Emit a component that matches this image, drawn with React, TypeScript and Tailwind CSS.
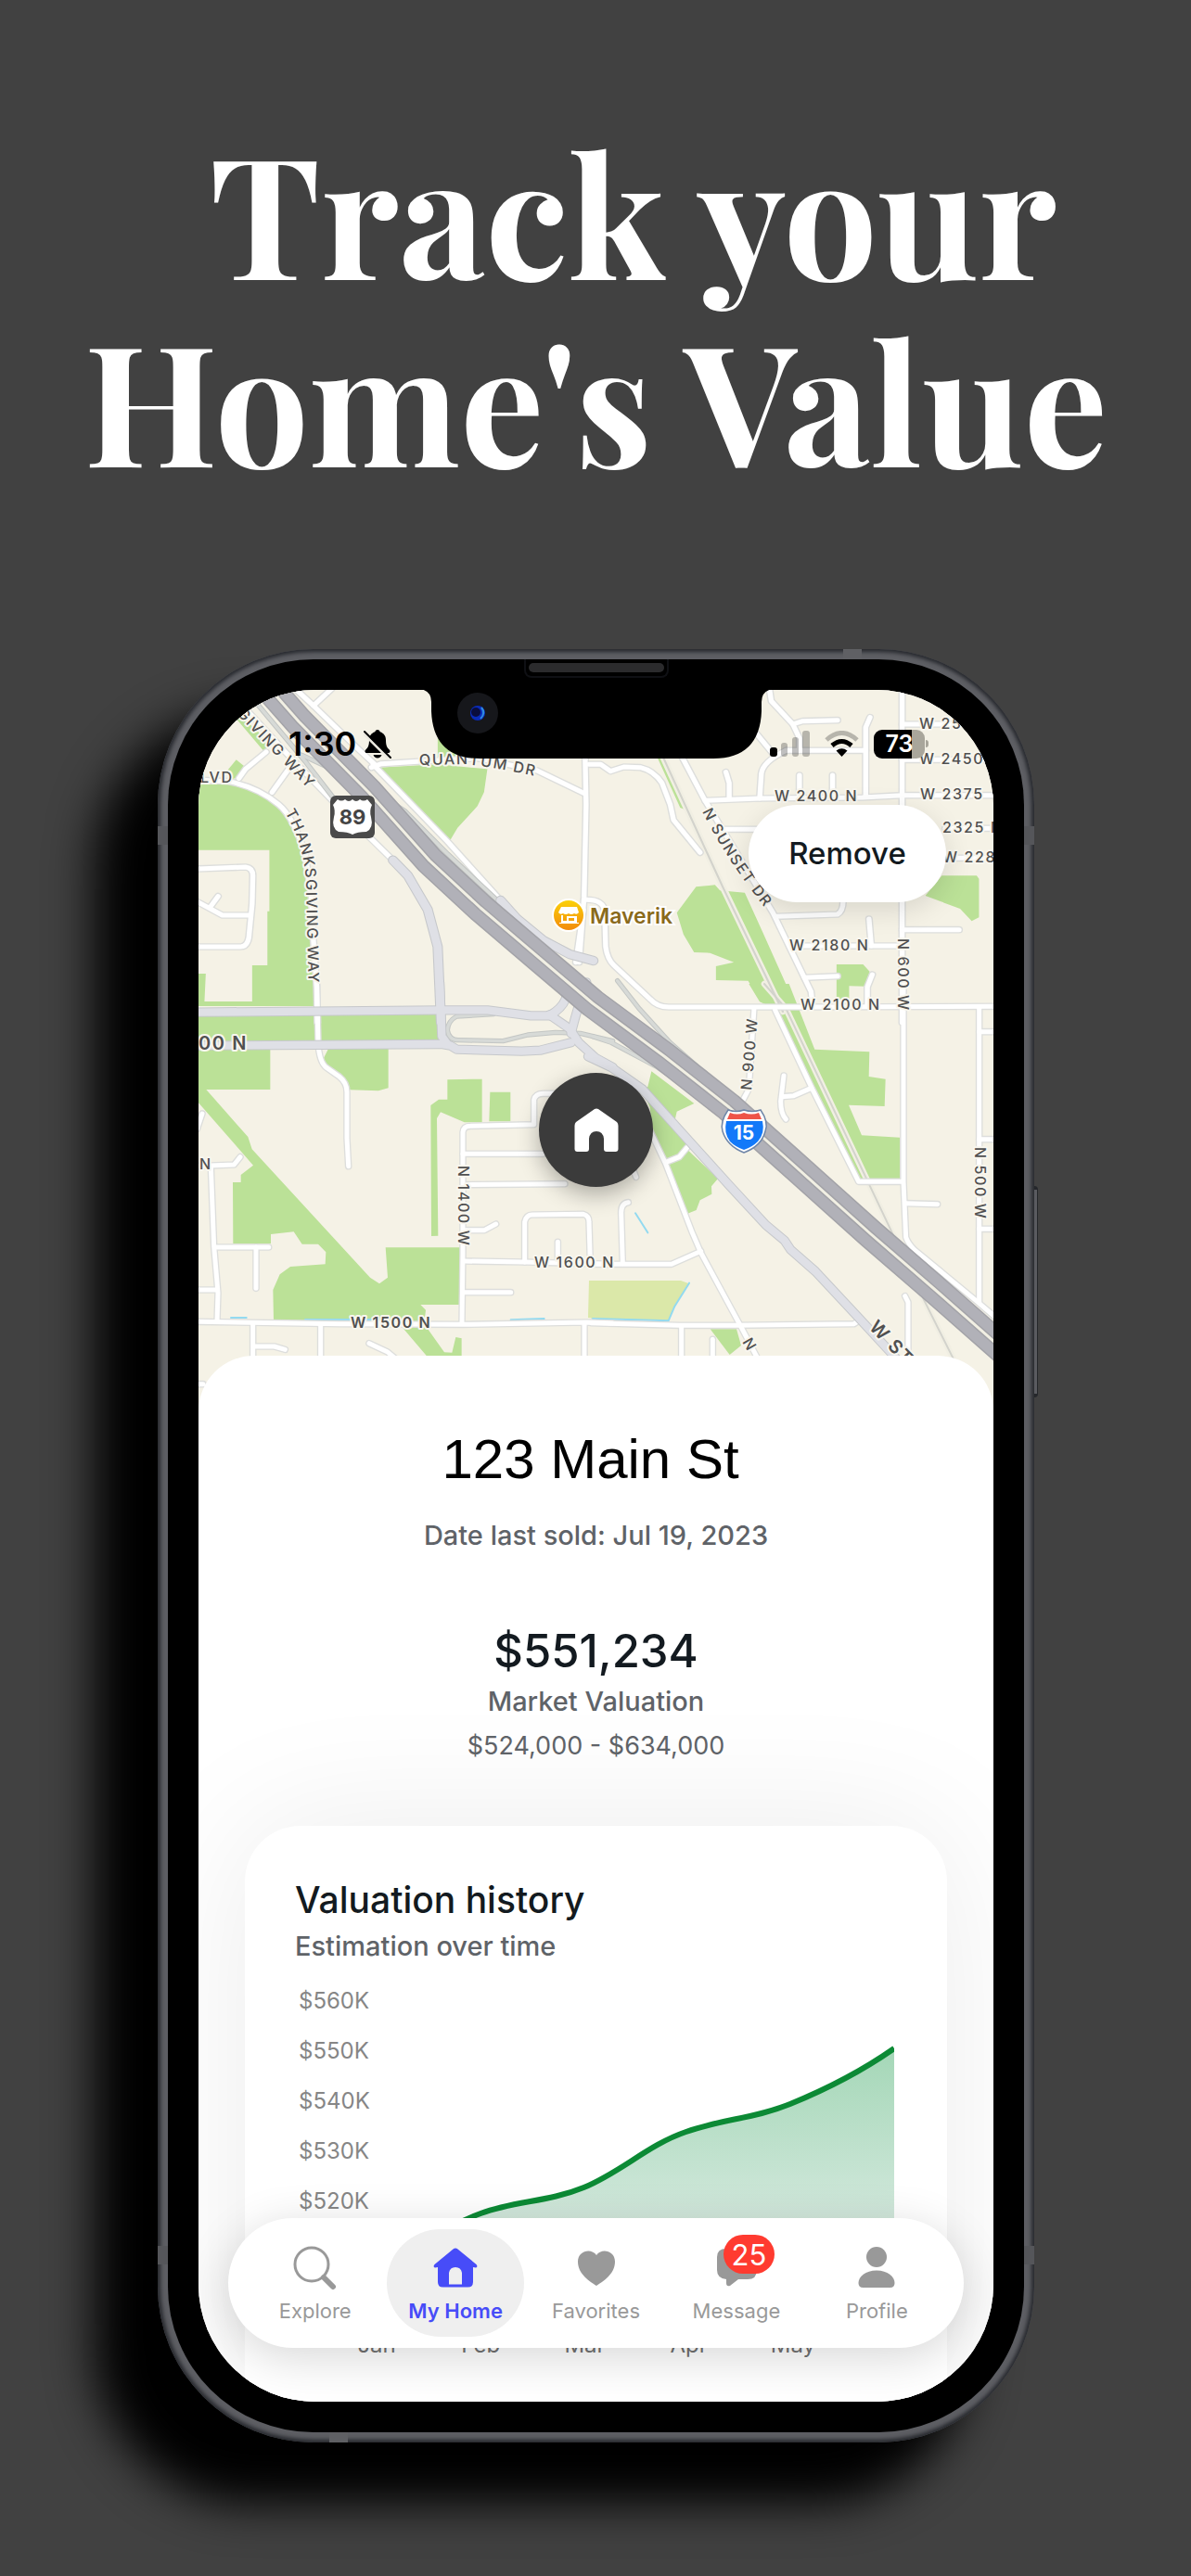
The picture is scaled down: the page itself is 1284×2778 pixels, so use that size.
import React from "react";

type Tile = {
  transform: string;
  parks: string[];
  fields?: string[];
  roads: string[];
  majors: string[];
  ramps: string[];
  rails?: string[];
  water?: string[];
};

const tiles: Tile[] = [
  {
    transform: "translate(80 680) scale(0.35714 0.33333)",
    parks: [
      "M378 495L470 495L560 520L620 565L680 650L710 800L735 1000L735 1212H378V1107H400L396 1197H540V1080H586V905H592V707H378Z",
      "M488 260L555 320L592 370L575 387L482 270Z",
      "M465 450L492 415L515 435L500 470L480 478Z",
      "M920 440L1100 430L1250 445L1240 520L1220 565L1160 635L1135 680Z",
      "M1100 345L1170 400V425H1100Z",
    ],
    roads: [
      "M370 480L470 485Q560 505 620 560Q665 600 700 720L718 850L725 1000L735 1150L737 1265",
      "M500 475L520 445L582 390",
      "M600 520L660 430",
      "M490 215L640 390L780 545L965 740",
      "M670 185L725 240L860 380L915 435",
      "M725 240L780 185",
      "M905 430L1130 680L1290 870",
      "M900 440L930 428L1050 420L1220 410L1400 450L1545 525",
      "M370 768L520 762Q542 765 542 790L540 880L530 990Q525 1020 505 1020H370",
      "M370 872L450 918H530",
      "M413 892L437 857",
    ],
    majors: [
      "M965 740L1010 790L1070 900L1100 1020L1110 1265",
      "M1290 870L1340 930L1420 1000L1500 1045L1570 1065",
    ],
    ramps: [
      "M540 215L700 420L790 545",
      "M690 400L870 490L1000 580L1130 720L1290 880",
    ],
  },
  {
    transform: "translate(620 680) scale(0.35714 0.33333)",
    parks: [
      "M250 405L270 410L325 540L343 580L320 570Z",
      "M310 910L368 826L425 820L440 838L515 845L570 975L685 1250L640 1260L605 1205L565 1200L525 1130L428 1128V1083L482 1070L410 1040L362 1038L330 980Z",
      "M1060 855L1110 790H1215L1222 800V925L1200 937L1165 897Z",
      "M792 1077H872L892 1100L880 1148L830 1147V1190H792Z",
    ],
    roads: [
      "M590 190L595 225L660 300L680 345V385",
      "M660 300L690 290L795 287",
      "M550 330L600 395",
      "M880 530V310L893 278",
      "M640 385H880",
      "M640 385Q570 420 565 460L560 540",
      "M458 455L468 490V540",
      "M680 465V535",
      "M780 465V535",
      "M395 547L560 540L870 537L990 530H1275",
      "M990 185V1265",
      "M990 300H1275",
      "M990 415H1275",
      "M1120 637H1275",
      "M1120 733H1275",
      "M325 405L395 547L600 910L715 1165L720 1210",
      "M455 640H560",
      "M610 922L795 915Q812 905 812 870",
      "M650 1017H990",
      "M890 930L897 1017",
      "M990 965H1162",
      "M695 1120L795 1115",
      "M900 1110L885 1150V1210",
      "M30 868Q92 865 92 910L95 1020Q100 1060 120 1080L230 1190Q250 1215 285 1215H680L1275 1213",
      "M45 430L80 430L110 452L150 438L200 440Q240 450 265 490L290 560L300 610L380 715",
      "M33 400L36 560L30 860L15 1070",
      "M28 900L5 1070",
    ],
    majors: [],
    ramps: [],
    rails: ["M270 410L450 830L630 1230"],
  },
  {
    transform: "translate(200 1060) scale(0.33333)",
    parks: [
      "M45 100L825 95V185H45Z",
      "M45 210H277V342H70L205 495L218 535L600 950L630 970L657 950L650 853H893L888 1038H763L780 1055L775 1100L840 1192L865 1193L877 1143L896 1147V1210H788L705 1112L700 1090H288L286 990L308 940L342 915L455 907L457 868L432 842H380L353 802L279 810V840H157L156 642H182V618L222 587L45 385Z",
      "M450 240L465 210H659V337L627 346L535 343L520 315L455 262Z",
      "M850 310L962 308V448H905L828 415L816 435L820 815L798 816L796 393L822 374H850Z",
      "M988 350H1054V445H985Z",
    ],
    fields: ["M1308 960H1381V1085L1305 1080Z"],
    roads: [
      "M427 -5L432 190C435 250 450 265 460 272L500 300Q525 320 525 350V500L530 590",
      "M897 1095L900 870V480Q902 460 925 460L1130 455V375Q1135 355 1160 355H1200",
      "M900 550H1160",
      "M910 650L1230 647",
      "M910 797H970L1007 777",
      "M905 897L1100 900L1385 907",
      "M1100 900V770Q1105 747 1125 747L1290 745Q1308 750 1308 770L1312 900",
      "M1207 835V900",
      "M900 998H1055",
      "M40 1093L500 1100L900 1102L1300 1095L1385 1098",
      "M85 590L95 850L108 1000L105 1090",
      "M40 590L160 585L180 560",
      "M100 852H272",
      "M231 852V985",
      "M40 990H105",
      "M57 420L40 470",
      "M221 1100V1210",
      "M225 1173H290L325 1183",
      "M440 1105V1210",
      "M597 1163L655 1190L685 1215",
      "M1293 1105V1210",
      "M30 1295H60",
    ],
    majors: [
      "M40 92L830 85L980 85L1120 103H1180Q1220 80 1232 50L1245 -5",
      "M40 200L830 195L860 200L880 212L1090 218L1150 215L1250 190",
      "M825 -5L832 170L850 195",
      "M1180 100L1245 145L1275 190L1330 240L1385 270",
      "M1250 160Q1275 60 1300 -5",
    ],
    ramps: [
      "M1000 98L880 105Q852 120 850 150Q855 182 885 182L1030 185L1110 165L1200 157L1280 160L1385 185",
    ],
    water: ["M1055 1087L1163 1083", "M150 1080H200", "M390 1086H620"],
  },
  {
    transform: "translate(640 1060) scale(0.33333)",
    parks: [
      "M160 342L178 333L190 283L328 387L272 413L265 445L320 510L300 530L280 560L235 578L195 480L185 400Z",
      "M240 590L310 540L405 630L384 655L385 680L347 700L335 732L307 743Z",
      "M505 0H635L718 212L895 220L893 300L947 308L944 396L828 392L870 490L993 497V632H865L590 80L540 58Z",
      "M380 1117H465L480 1170L443 1200Z",
    ],
    fields: ["M-5 960H285L312 970L265 1040L245 1090L-5 1083Z"],
    roads: [
      "M522 78L505 340L485 378",
      "M590 85L710 340L860 640H1000",
      "M1005 0V640L1013 820Q1020 840 1040 860L1240 1025L1310 1085",
      "M1010 710L1115 713",
      "M618 297L608 380Q608 420 625 438",
      "M612 365L650 362L705 338",
      "M1250 75V1030",
      "M1250 155H1300",
      "M1250 503H1300",
      "M1250 793H1300",
      "M1010 1010L1020 1030V1210",
      "M150 400L235 580L320 800L350 870L480 1110L535 1215",
      "M235 578L280 560L305 530",
      "M-5 907H255L350 865",
      "M97 905L92 740Q92 710 115 707",
      "M140 625L130 600",
      "M-5 1097L280 1105H460L845 1100L865 1087",
      "M287 1107V1210",
      "M388 1150V1210",
    ],
    majors: [
      "M-15 235L60 270L160 340L440 650L560 780L620 830L640 860L720 930L860 1080L980 1210",
    ],
    ramps: [
      "M0 170L60 190L210 270L340 360",
      "M80 -10L150 80L250 190L335 265",
    ],
    rails: ["M555 0L625 80L890 640L980 830L1060 1000L1165 1210"],
    water: ["M0 1083L245 1090L265 1043L312 968", "M138 742L178 805"],
  },
];

const freeway =
  "M286 735L323 777L398 853L464 927L519 978L580 1030L640 1081L717 1138L787 1193L853 1252L940 1330L1007 1388L1082 1454";

const streetLabels: { text: string; x: number; y: number; turn?: number; strong?: boolean }[] = [
  { text: "LVD", x: 217, y: 843 },
  { text: "W 2400 N", x: 836, y: 863 },
  { text: "W 254", x: 992, y: 785 },
  { text: "W 2450", x: 992, y: 823 },
  { text: "W 2375", x: 993, y: 861 },
  { text: "2325 N", x: 1017, y: 897 },
  { text: "W 228", x: 1017, y: 929 },
  { text: "W 2180 N", x: 852, y: 1024 },
  { text: "W 2100 N", x: 864, y: 1088 },
  { text: "N 600 W", x: 969, y: 1011, turn: 90 },
  { text: "N 900 W", x: 811, y: 1175, turn: -85 },
  { text: "N 500 W", x: 1052, y: 1236, turn: 90 },
  { text: "N 1400 W", x: 495, y: 1256, turn: 90 },
  { text: "W 1600 N", x: 577, y: 1366 },
  { text: "N", x: 216, y: 1260 },
  { text: "N", x: 801, y: 1446, turn: 60 },
  { text: "W 1500 N", x: 379, y: 1431, strong: true },
];

function layer(
  pick: (t: Tile) => string[] | undefined,
  props: React.SVGProps<SVGPathElement>,
) {
  return tiles.map((t, i) => (
    <g key={i} transform={t.transform}>
      {(pick(t) ?? []).map((d, j) => (
        <path key={j} d={d} {...props} />
      ))}
    </g>
  ));
}

function StreetMap() {
  const line = { fill: "none", strokeLinecap: "round", strokeLinejoin: "round" } as const;
  return (
    <svg
      viewBox="215 743 857 782"
      className="block w-full bg-[#f5f2e6]"
      role="img"
      aria-label="Map around the home"
    >
      {layer((t) => t.parks, { fill: "#bbe197" })}
      {layer((t) => t.fields, { fill: "#dbe8a9" })}
      {layer((t) => t.water, { ...line, stroke: "#93daf0", strokeWidth: 6 })}
      {layer((t) => t.rails, { ...line, stroke: "#f1efe3", strokeWidth: 20 })}
      {layer((t) => t.rails, { ...line, stroke: "#d3d3cc", strokeWidth: 6 })}
      {layer((t) => t.roads, { ...line, stroke: "#dddedc", strokeWidth: 23 })}
      {layer((t) => t.roads, { ...line, stroke: "#ffffff", strokeWidth: 15 })}
      {layer((t) => t.ramps, { ...line, stroke: "#c3c6c4", strokeWidth: 16 })}
      {layer((t) => t.ramps, { ...line, stroke: "#d7dad7", strokeWidth: 10 })}
      {layer((t) => t.majors, { ...line, stroke: "#c6c8cb", strokeWidth: 31 })}
      {layer((t) => t.majors, { ...line, stroke: "#dfe0e6", strokeWidth: 25 })}
      <path d={freeway} {...line} stroke="#a3a3a8" strokeWidth="32" />
      <path d={freeway} {...line} stroke="#b1b1b8" strokeWidth="29" />
      <path d={freeway} {...line} stroke="#a3a3a8" strokeWidth="6" />
      <path d={freeway} {...line} stroke="#f1efe3" strokeWidth="3" />

      <g
        className="font-['Inter',sans-serif] text-[16px] font-medium tracking-widest"
        fill="#505050"
        stroke="#f8f6ee"
        strokeWidth="4"
        strokeLinejoin="round"
        paintOrder="stroke"
      >
        {streetLabels.map((l, i) => (
          <text
            key={i}
            className={l.strong ? "font-semibold" : undefined}
            transform={`translate(${l.x} ${l.y}) rotate(${l.turn ?? 0})`}
          >
            {l.text}
          </text>
        ))}
        <text x="215" y="1131" className="text-[20px] font-semibold">
          00 N
        </text>
        <text transform="translate(937 1431) rotate(46)" className="text-[20px] font-semibold">
          W ST
        </text>
        <path id="giving" d="M256 769L345 862" fill="none" stroke="none" />
        <path id="thanks" d="M308 875Q332 915 331 960L334 1075" fill="none" stroke="none" />
        <path id="quantum" d="M453 824L500 823Q530 825 600 841" fill="none" stroke="none" />
        <path id="sunset" d="M758 874Q785 930 845 1002" fill="none" stroke="none" />
        <text>
          <textPath href="#giving">GIVING WAY</textPath>
        </text>
        <text>
          <textPath href="#thanks">THANKSGIVING WAY</textPath>
        </text>
        <text>
          <textPath href="#quantum">QUANTUM DR</textPath>
        </text>
        <text>
          <textPath href="#sunset">N SUNSET DR</textPath>
        </text>
      </g>

      <rect x="357" y="857" width="48" height="46" rx="6" fill="#4a4a4a" />
      <path
        d="M365 861Q369 864 373 861Q377 865 381 861Q385 865 389 861Q393 864 397 861L402 867Q399 873 401 880Q404 892 396 896Q386 896 381 899Q376 896 366 896Q358 892 361 880Q363 873 360 867Z"
        fill="#fff"
      />
      <text
        x="381"
        y="888"
        textAnchor="middle"
        fill="#444"
        className="font-['Inter',sans-serif] text-[22px] font-bold"
      >
        89
      </text>

      <path
        d="M786 1196Q795 1199 803 1196Q812 1199 821 1196Q830 1209 826 1219Q822 1235 803 1242Q785 1235 780 1219Q777 1209 786 1196Z"
        fill="#fff"
        stroke="#6f86a8"
        strokeWidth="1.5"
      />
      <path d="M788 1199Q796 1202 803 1199Q811 1202 819 1199L822 1206H785Z" fill="#ee5449" />
      <path
        d="M784 1208H823Q826 1221 818 1230Q812 1236 803 1239Q794 1236 788 1230Q781 1221 784 1208Z"
        fill="#1279f9"
      />
      <text
        x="803"
        y="1228"
        textAnchor="middle"
        fill="#fff"
        className="font-['Inter',sans-serif] text-[21px] font-bold"
      >
        15
      </text>

      <defs>
        <linearGradient id="shop" x1="0" y1="0" x2="0" y2="1">
          <stop offset="0" stopColor="#fbd10a" />
          <stop offset="1" stopColor="#f28a0a" />
        </linearGradient>
      </defs>
      <circle cx="614" cy="986" r="18" fill="#fff" />
      <circle cx="614" cy="986" r="16" fill="url(#shop)" />
      <path
        fill="#fff"
        fillRule="evenodd"
        d="M606 977H623L625 983Q623 986 620 984Q617 986 614 984Q611 986 608 984Q605 986 603 983ZM606 986H608V992H612V987H623V994H625V995H604V994H606ZM614 989V992H620V989Z"
      />
      <text
        x="637"
        y="995"
        fill="#8a6a1c"
        stroke="#fff"
        strokeWidth="4"
        paintOrder="stroke"
        className="font-['Inter',sans-serif] text-[23px] font-semibold"
      >
        Maverik
      </text>
    </svg>
  );
}

function StatusBar() {
  return (
    <div className="absolute inset-x-0 top-0 flex items-center justify-between pt-[34px] pr-[70px] pl-[97px] text-black">
      <div className="flex items-center gap-2">
        <span className="text-[36px] leading-[48px] font-semibold">1:30</span>
        <svg viewBox="0 0 30 31" className="h-[31px] w-[30px]" aria-label="Silent mode">
          <path
            fill="currentColor"
            d="M15 0c-1.600 0-2.500 1-2.700 2.300C8 3.700 6 7 6 11c0 6-1.200 8-3.700 10.500C.8 23 1.500 25 3.500 25h23c2 0 2.700-2 1.200-3.500C25.200 19 24 17 24 11c0-4-2-7.300-6.300-8.700C17.500 1 16.600 0 15 0ZM10.500 27c.6 2.200 2.300 3.500 4.500 3.500s3.900-1.300 4.500-3.500Z"
          />
          <path d="M0 4L28 32" stroke="#ece9df" strokeWidth="3" />
          <path d="M1 2L29 30" stroke="currentColor" strokeWidth="2" strokeLinecap="round" />
        </svg>
      </div>
      <div className="flex items-center gap-4">
        <svg viewBox="0 0 43 28" className="h-7 w-[43px]" aria-label="Signal: one bar">
          <rect x="0" y="18" width="8" height="10" rx="3" fill="#000" />
          <g fill="#000" opacity="0.25">
            <rect x="12" y="13" width="7" height="15" rx="3" />
            <rect x="24" y="7" width="7" height="21" rx="3" />
            <rect x="35" y="0" width="8" height="28" rx="3" />
          </g>
        </svg>
        <svg viewBox="0 0 37 28" className="h-7 w-[37px]" fill="none" aria-label="Wi-Fi">
          <path d="M2 10Q18.500 -5 35 10" stroke="#000" strokeOpacity="0.25" strokeWidth="5" />
          <path d="M8 16Q18.500 7 29 16" stroke="#000" strokeWidth="5" />
          <path d="M18.500 28L12.500 21.500Q18.500 17 24.500 21.500Z" fill="#000" />
        </svg>
        <div className="flex items-center gap-px">
          <div className="flex h-[31px] w-[55px] items-center justify-center rounded-[9px] bg-[linear-gradient(90deg,#000_74%,#a9a69b_74%)]">
            <span className="text-[25px] leading-[31px] font-semibold text-white">73</span>
          </div>
          <div className="h-2 w-[3px] rounded-r-full bg-[#a9a69b]" />
        </div>
      </div>
    </div>
  );
}

const months = ["Jan", "Feb", "Mar", "Apr", "May"];
const prices = ["$560K", "$550K", "$540K", "$530K", "$520K", "$510K"];
const curve =
  "M28 305C66 270 102 246 140 232C178 218 212 220 251 204C292 187 320 158 361 144C400 130 434 130 473 114C512 98 548 80 585 54";

function ValuationChart() {
  return (
    <figure className="mt-3">
      <div className="flex">
        <ul className="flex w-[83px] flex-col pl-1 text-[24px] leading-[54px] text-[#868686]">
          {prices.map((p) => (
            <li key={p}>{p}</li>
          ))}
        </ul>
        <div className="h-[326px] flex-1 pr-[3px]">
          <svg
            viewBox="23 -24 562 326"
            className="block h-full w-full"
            preserveAspectRatio="none"
            aria-label="Valuation from January to June"
          >
            <defs>
              <linearGradient id="area" x1="0" y1="54" x2="0" y2="300" gradientUnits="userSpaceOnUse">
                <stop offset="0" stopColor="#a4d7b7" />
                <stop offset="0.75" stopColor="#d2e8dc" />
                <stop offset="1" stopColor="#e0f0e7" />
              </linearGradient>
            </defs>
            <path d={`${curve}V290H28Z`} fill="url(#area)" />
            <path d={curve} fill="none" stroke="#0c8a35" strokeWidth="6" />
          </svg>
        </div>
      </div>
      <div className="grid grid-cols-5 pt-[56px] pr-[56px] pl-8 text-center text-[24px] leading-8 text-[#707070]">
        {months.map((m) => (
          <span key={m}>{m}</span>
        ))}
      </div>
    </figure>
  );
}

const icons: Record<string, React.ReactNode> = {
  Explore: (
    <>
      <circle cx="20" cy="20" r="18" fill="none" stroke="currentColor" strokeWidth="3" />
      <path d="M33 34L43 44" stroke="currentColor" strokeWidth="6" strokeLinecap="round" />
    </>
  ),
  "My Home": (
    <path
      fill="currentColor"
      d="M21.500 3.500Q24 1.500 26.500 3.500L46.500 20Q48.500 22.500 46 23.500L43 23V39Q43 44.500 37.500 44.500H10.500Q5 44.500 5 39V23L2 23.500Q-.500 22.500 1.500 20ZM17 41.500H31V29Q30 23 24 23T17 29Z"
    />
  ),
  Favorites: (
    <path
      fill="currentColor"
      d="M24 43C18 39 4 31 4 17C4 4.500 19 2 24 10C29 2 44 4.500 44 17C44 31 30 39 24 43Z"
    />
  ),
  Message: (
    <path
      fill="currentColor"
      d="M13 3H37Q46 3 46 12V26Q46 36 36 36H26L17 43Q13 44 13 40V36Q3 35 3 26V12Q3 3 13 3Z"
    />
  ),
  Profile: (
    <>
      <circle cx="24" cy="12" r="11" fill="currentColor" />
      <path
        fill="currentColor"
        d="M24 26.500C36 26.500 43.500 33 43.500 40Q43.500 45 38.500 45H9.500Q4.500 45 4.500 40C4.500 33 12 26.500 24 26.500Z"
      />
    </>
  ),
};

function TabBar() {
  return (
    <nav
      aria-label="Main"
      className="absolute inset-x-8 bottom-[58px] flex h-[140px] gap-1 rounded-full bg-white px-5 py-3 shadow-[0_10px_50px_rgba(0,0,0,0.16)]"
    >
      {Object.keys(icons).map((name) => {
        const active = name === "My Home";
        return (
          <button
            key={name}
            type="button"
            aria-current={active ? "page" : undefined}
            className={
              active
                ? "flex flex-1 flex-col items-center gap-2 rounded-full bg-[#efefef] pt-[18px] text-[#474cf8]"
                : "flex flex-1 flex-col items-center gap-2 rounded-full pt-[18px] text-[#999999]"
            }
          >
            <span className="relative">
              <svg viewBox="0 0 48 48" className="h-12 w-12" aria-hidden="true">
                {icons[name]}
              </svg>
              {name === "Message" && (
                <span className="absolute -top-3 left-[10px] flex h-[42px] w-[55px] items-center justify-center rounded-full bg-[#ff3b30] text-[31px] leading-none text-white">
                  25
                </span>
              )}
            </span>
            <span
              className={
                active ? "text-[22px] leading-7 font-semibold" : "text-[22px] leading-7"
              }
            >
              {name}
            </span>
          </button>
        );
      })}
    </nav>
  );
}

function Phone() {
  return (
    <div className="relative w-full max-w-[945px]">
      <div className="absolute top-[392px] -left-[6px] h-[70px] w-2 rounded-l-sm border-y-4 border-l-2 border-[#25272b] bg-[#4a4b50]" />
      <div className="absolute top-[530px] -left-1 h-[144px] w-2 rounded-l-sm border-y-4 border-l-2 border-[#25272b] bg-[#5a5b60]" />
      <div className="absolute top-[713px] -left-1 h-[144px] w-2 rounded-l-sm border-y-4 border-l-2 border-[#25272b] bg-[#5a5b60]" />
      <div className="absolute top-[579px] -right-1 h-[228px] w-2 rounded-r-sm border-y-4 border-r border-[#25272b] bg-[#5a5b60]" />
      <div className="relative rounded-[168px] bg-[#5d5e63] p-[11px] shadow-[-68px_66px_50px_#000,inset_0_0_4px_3px_#26282d]">
        <div className="rounded-[157px] bg-black p-[33px]">
          <div className="relative overflow-hidden rounded-[126px] bg-white">
            <StreetMap />
            <StatusBar />
            <button
              type="button"
              className="absolute top-[124px] right-[51px] h-[105px] w-[213px] rounded-full bg-white text-[33px] font-medium text-[#131a20] shadow-[0_8px_30px_rgba(0,0,0,0.12)]"
            >
              Remove
            </button>
            <div className="absolute inset-x-0 top-[413px] flex justify-center">
              <div className="flex h-[123px] w-[123px] items-center justify-center rounded-full bg-[#3b3b3b] shadow-[0_8px_24px_rgba(0,0,0,0.3)]">
                <svg viewBox="0 0 48 48" className="h-12 w-12" aria-label="Your home">
                  <path
                    fill="#fff"
                    d="M22 1Q24 0 26 1L46 15Q47.500 16.500 47.500 19V44Q47.500 47 44.500 47H35Q32 47 32 44V33Q31 25 24 25T16 33V44Q16 47 13 47H3.500Q.500 47 .500 44V19Q.500 16.500 2 15Z"
                  />
                </svg>
              </div>
            </div>

            <section className="relative -mt-16 overflow-hidden rounded-t-[60px] bg-white pt-[76px] text-center text-[#5f6368]">
              <h2 className="pr-3 font-['Liberation_Sans',Arial,sans-serif] text-[60px] leading-[72px] text-black">
                123 Main St
              </h2>
              <p className="mt-[26px] text-[29px] leading-10 font-medium">Date last sold: Jul 19, 2023</p>
              <p className="mt-[75px] text-[49px] leading-[60px] font-medium text-[#131a20]">$551,234</p>
              <p className="mt-1 text-[29px] leading-10 font-medium">Market Valuation</p>
              <p className="mt-2 text-[27px] leading-10">$524,000 - $634,000</p>
              <article className="mx-[50px] mt-[66px] h-[621px] rounded-t-[60px] bg-white px-[54px] pt-[54px] text-left shadow-[0_0_150px_rgba(0,0,0,0.08)]">
                <h3 className="text-[39px] leading-[52px] font-medium text-[#131a20]">Valuation history</h3>
                <p className="mt-1 text-[29px] leading-10 font-medium">Estimation over time</p>
                <ValuationChart />
              </article>
            </section>

            <TabBar />

            <div className="absolute inset-x-0 -top-px flex justify-center">
              <svg viewBox="0 0 380 76" className="h-[76px] w-[380px]" aria-hidden="true">
                <path d="M0 0H380Q368 2 368 14V24Q366 75 316 75H64Q14 75 12 24V14Q12 2 0 0Z" fill="#000" />
                <circle cx="62" cy="26" r="22" fill="#16171b" />
                <circle cx="62" cy="26" r="8" fill="#0a2bb8" />
                <circle cx="60" cy="25" r="5" fill="#0a0d3c" />
                <path d="M66 20Q71 26 65 32" stroke="#2f8de0" strokeWidth="2" fill="none" />
              </svg>
            </div>
          </div>
        </div>
        <div className="absolute inset-x-0 top-[11px] flex justify-center">
          <div className="h-5 w-[156px] rounded-b-lg border-x-2 border-b-2 border-[#0f1014] px-[3px] pt-1">
            <div className="h-[10px] rounded-full bg-[#2b2b2d]" />
          </div>
        </div>
        <div className="absolute top-0 right-[186px] h-[11px] w-5 bg-[#5f6064]" />
        <div className="absolute bottom-0 left-[185px] h-[11px] w-5 bg-[#5f6064]" />
        <div className="absolute top-[191px] left-0 h-5 w-[11px] bg-[#55565a]" />
        <div className="absolute top-[191px] right-0 h-5 w-[11px] bg-[#55565a]" />
        <div className="absolute bottom-[192px] left-0 h-5 w-[11px] bg-[#55565a]" />
        <div className="absolute right-0 bottom-[192px] h-5 w-[11px] bg-[#55565a]" />
      </div>
    </div>
  );
}

export default function App() {
  return (
    <main className="flex min-h-screen flex-col items-center overflow-hidden bg-[#414141] pb-36 pl-px font-['Inter',sans-serif]">
      <h1 className="pt-[126px] text-center font-['Playfair_Display','Liberation_Serif',serif] text-[180px] leading-[202px] font-bold text-white">
        <span className="block pl-20">Track your</span>
        <span className="block">Home's Value</span>
      </h1>
      <div className="mt-[170px] flex w-full justify-center">
        <Phone />
      </div>
    </main>
  );
}
